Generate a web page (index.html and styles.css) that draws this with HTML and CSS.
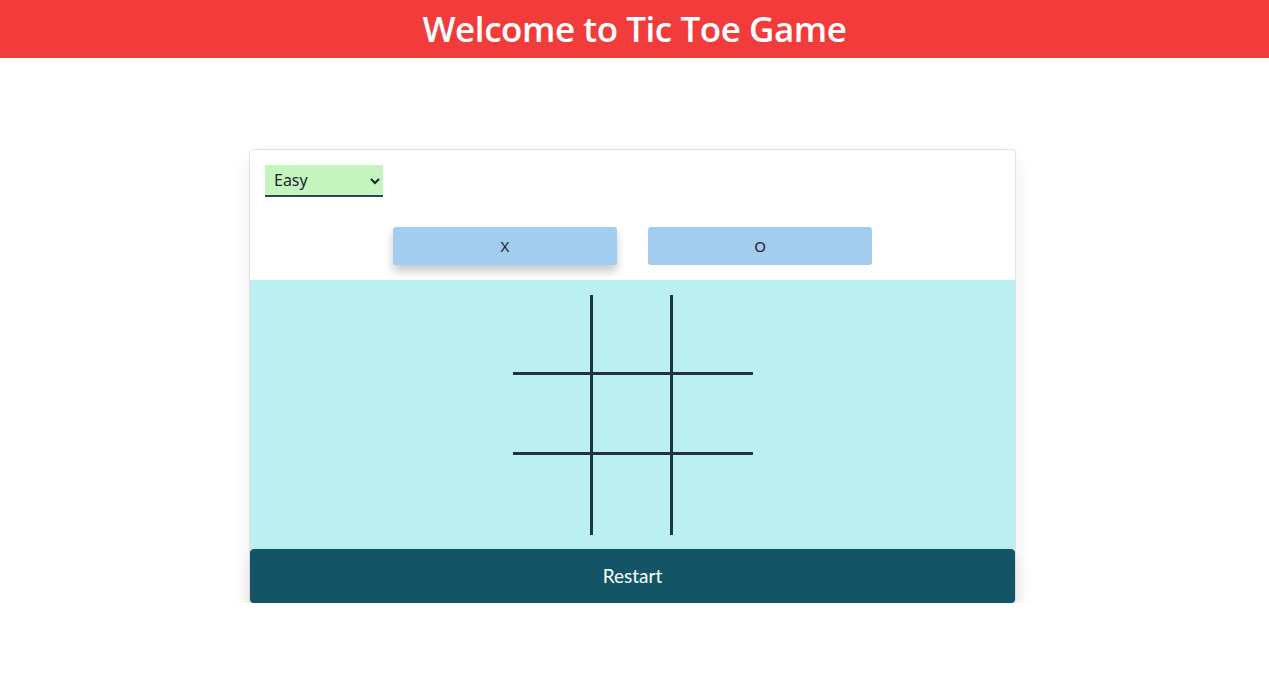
FILE: index.html
```html
<!DOCTYPE html>
<html>
<head>
<meta charset="utf-8">
<link rel="stylesheet" href="styles.css">
</head>
<body>
<header class="topbar"><h1 class="title">Welcome to Tic Toe Game</h1></header>
<main class="page">
  <section class="card">
    <div class="controls">
      <select class="level">
        <option>Easy</option>
        <option>Medium</option>
        <option>Hard</option>
      </select>
      <div class="players">
        <button class="player active">X</button>
        <button class="player">O</button>
      </div>
    </div>
    <div class="board-wrap">
      <div class="board">
        <div class="cell"></div><div class="cell"></div><div class="cell"></div>
        <div class="cell"></div><div class="cell"></div><div class="cell"></div>
        <div class="cell"></div><div class="cell"></div><div class="cell"></div>
      </div>
    </div>
    <button class="restart">Restart</button>
  </section>
</main>
</body>
</html>
```
FILE: styles.css
```css
* { box-sizing: border-box; }
html, body { margin: 0; padding: 0; background: #fff; }
body { font-family: "Noto Sans", "Open Sans", sans-serif; }
.topbar {
  background: #f23b3b;
  height: 58px;
  display: flex;
  align-items: center;
  justify-content: center;
}
.title {
  margin: 0;
  color: #fff;
  font-family: "Open Sans", "Noto Sans", sans-serif;
  font-weight: 600;
  font-size: 35px;
  letter-spacing: -0.45px;
  line-height: 1;
  position: relative;
  top: -1px;
}
.page { padding-top: 91px; display: flex; justify-content: center; padding-right: 4px; }
.card {
  width: 767px;
  border: 1px solid #e2e2e2;
  border-radius: 4px;
  background: #fff;
  display: flex;
  flex-direction: column;
  box-shadow: 0 10px 20px rgba(0,0,0,0.08);
}
.controls { padding: 15px 15px 15px; }
.level {
  display: block;
  width: 118px;
  height: 32px;
  background: #c5f5be;
  border: none;
  border-bottom: 2px solid #2e4756;
  border-radius: 0;
  font-family: "Noto Sans", sans-serif;
  font-size: 16px;
  color: #1b2530;
  padding: 0 5px;
}
.players {
  margin-top: 30px;
  display: flex;
  justify-content: center;
  gap: 31px;
}
.player {
  width: 224px;
  height: 38px;
  background: #a2cdee;
  border: none;
  border-radius: 3px;
  font-family: "Noto Sans", sans-serif;
  font-size: 15px;
  color: #1a2230;
}
.player.active { box-shadow: 0 6px 10px rgba(0,0,0,0.22); }
.board-wrap {
  background: #bcefef;
  height: 269px;
  display: flex;
  justify-content: center;
  align-items: center;
}
.board {
  display: grid;
  grid-template-columns: repeat(3, 80px);
  grid-template-rows: repeat(3, 80px);
}
.cell { border-right: 3px solid #1f3443; border-bottom: 3px solid #1f3443; }
.cell:nth-child(3n) { border-right: none; }
.cell:nth-child(n+7) { border-bottom: none; }
.restart {
  height: 54px;
  background: #135567;
  color: #fff;
  border: none;
  border-radius: 4px;
  font-family: "Lato", "Noto Sans", sans-serif;
  font-size: 19px;
  padding-bottom: 3px;
  margin: 0 0 -1px;
  box-shadow: 0 8px 14px rgba(0,0,0,0.1);
}
```
